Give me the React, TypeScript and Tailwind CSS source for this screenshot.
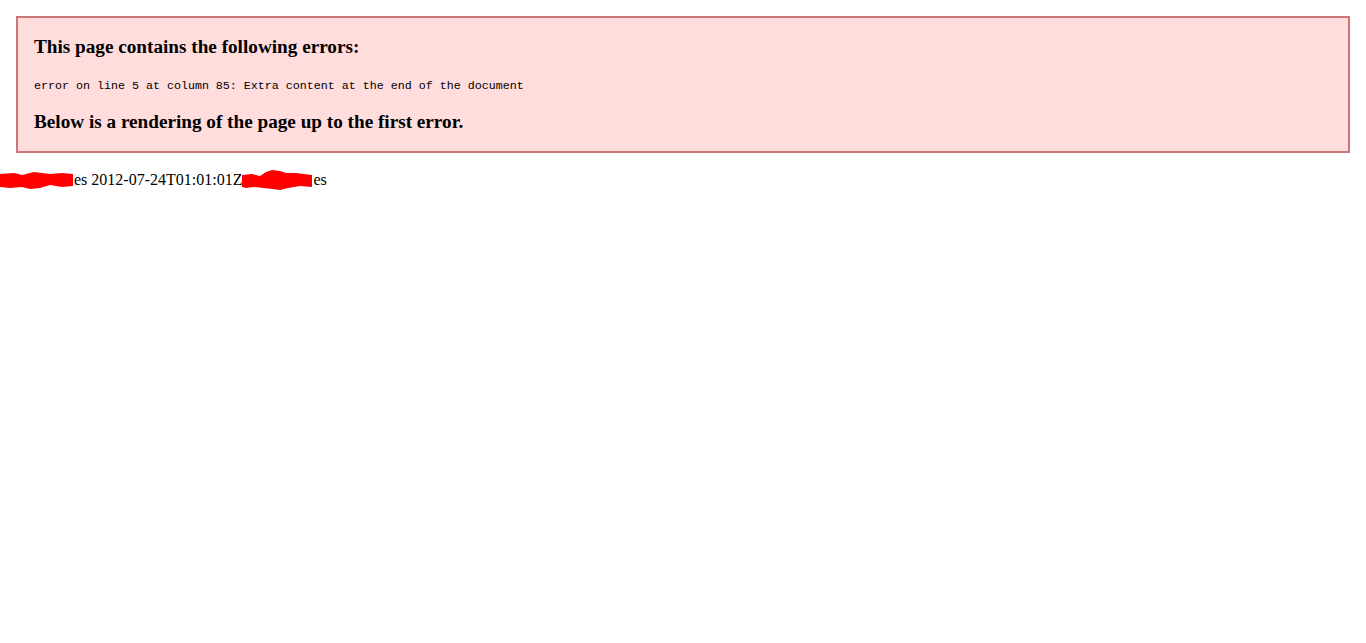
import { FC } from "react";

const Scribble: FC<{ width: number; variant: 1 | 2 }> = ({ width, variant }) => (
  <svg
    width={width}
    height={22}
    viewBox={`0 0 ${width} 22`}
    className="inline-block align-[-6px]"
  >
    {variant === 1 ? (
      <path
        d="M0 5 L14 4 L22 6 L34 3 L50 5 L62 4 L73 5 L73 17 L62 18 L50 16 L40 19 L30 20 L22 18 L10 19 L0 18 Z"
        fill="#ff0000"
      />
    ) : (
      <path
        d="M0 6 L10 5 L18 7 L24 3 L30 1 L38 2 L44 4 L54 4 L62 5 L70 6 L70 18 L58 17 L46 19 L38 21 L30 20 L22 19 L12 18 L4 19 L0 18 Z"
        fill="#ff0000"
      />
    )}
  </svg>
);

const App: FC = () => {
  return (
    <div className="min-h-[643px] bg-white text-black font-['Liberation_Serif',serif]">
      <div className="m-4 border-2 border-[#cc7777] bg-[#ffdddd] px-4">
        <h3 className="mt-[17.72px] mb-[19.72px] text-[19.2px] font-bold leading-[21.5px]">
          This page contains the following errors:
        </h3>
        <div className="pt-[2px] font-['Liberation_Mono',monospace] text-[11.67px] leading-[15px]">
          error on line 5 at column 85: Extra content at the end of the document
        </div>
        <h3 className="mt-[16.72px] mb-[18.72px] text-[19.2px] font-bold leading-[21.5px]">
          Below is a rendering of the page up to the first error.
        </h3>
      </div>
      <div className="text-base leading-[18px] whitespace-nowrap">
        <Scribble width={74} variant={1} />
        es 2012-07-24T01:01:01Z
        <Scribble width={71} variant={2} />
        es
      </div>
    </div>
  );
};

export default App;
